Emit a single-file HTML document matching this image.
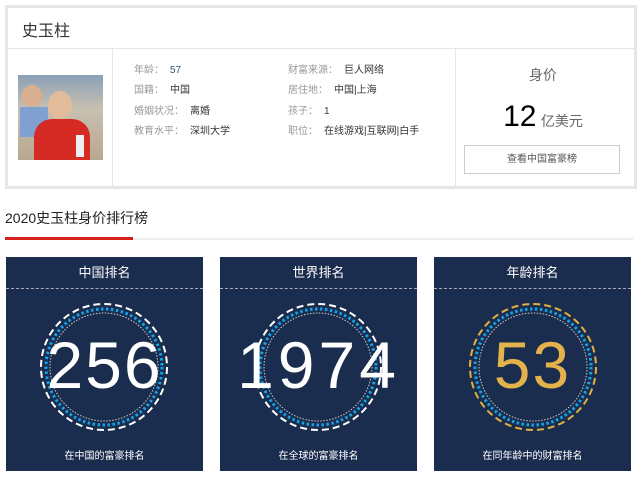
<!DOCTYPE html>
<html><head><meta charset="utf-8"><style>
body{margin:0;width:640px;height:481px;background:#fff;font-family:"Liberation Sans","Noto Sans CJK SC",sans-serif;position:relative;overflow:hidden}
.a{position:absolute}
.card{left:5px;top:5px;width:626px;height:178px;border:3px solid #e6e6e6;background:#fff}
.lab{color:#999;font-size:10px;line-height:14px}
.val{color:#333;font-size:10px;line-height:14px}
.panel{top:257px;width:197px;height:214px;background:#1b2d4e}
.ph{top:0;left:0;width:100%;height:31px;border-bottom:1px dashed #aab;color:#fff;font-size:13px;text-align:center;line-height:31px}
.num{top:70px;left:-20px;width:237px;text-align:center;color:#fff;font-size:66px;letter-spacing:2px;line-height:76px}
.cap{top:190px;left:0;width:100%;text-align:center;color:#fff;font-size:10px}
</style></head><body>
<div class="a card">
 <div class="a" style="left:0;top:0;width:626px;height:40px;border-bottom:1px solid #e6e6e6"></div>
 <div class="a" style="left:14px;top:9px;font-size:16px;color:#333">史玉柱</div>
 <div class="a" style="left:104px;top:41px;width:1px;height:137px;background:#e6e6e6"></div>
 <div class="a" style="left:447px;top:41px;width:1px;height:137px;background:#e6e6e6"></div>
 <div class="a" style="left:10px;top:67px;width:85px;height:85px;background:linear-gradient(#8aa0b8,#c8c0b0 40%,#b8a890);overflow:hidden">
  <div class="a" style="left:4px;top:10px;width:20px;height:22px;border-radius:50%;background:#d8b090"></div>
  <div class="a" style="left:2px;top:32px;width:28px;height:30px;background:#7fa0d0"></div>
  <div class="a" style="left:30px;top:16px;width:24px;height:28px;border-radius:50%;background:#e2bc9a"></div>
  <div class="a" style="left:16px;top:44px;width:56px;height:45px;border-radius:18px 18px 0 0;background:#d62a25"></div>
  <div class="a" style="left:58px;top:60px;width:8px;height:22px;background:#eee"></div>
 </div>
 <div class="a lab" style="left:126px;top:56px">年龄：</div><div class="a val" style="left:162px;top:56px;color:#357">57</div>
 <div class="a lab" style="left:126px;top:76px">国籍：</div><div class="a val" style="left:162px;top:76px">中国</div>
 <div class="a lab" style="left:126px;top:97px">婚姻状况：</div><div class="a val" style="left:182px;top:97px">离婚</div>
 <div class="a lab" style="left:126px;top:117px">教育水平：</div><div class="a val" style="left:182px;top:117px">深圳大学</div>
 <div class="a lab" style="left:280px;top:56px">财富来源：</div><div class="a val" style="left:336px;top:56px">巨人网络</div>
 <div class="a lab" style="left:280px;top:76px">居住地：</div><div class="a val" style="left:326px;top:76px">中国|上海</div>
 <div class="a lab" style="left:280px;top:97px">孩子：</div><div class="a val" style="left:316px;top:97px">1</div>
 <div class="a lab" style="left:280px;top:117px">职位：</div><div class="a val" style="left:316px;top:117px">在线游戏|互联网|白手</div>
 <div class="a" style="left:448px;top:57px;width:174px;text-align:center;font-size:14px;color:#666">身价</div>
 <div class="a" style="left:448px;top:92px;width:174px;text-align:center;color:#000"><span style="font-size:30px">12</span> <span style="font-size:14px;color:#666">亿美元</span></div>
 <div class="a" style="left:456px;top:137px;width:154px;height:27px;border:1px solid #ccc;text-align:center;line-height:27px;font-size:10px;color:#555">查看中国富豪榜</div>
</div>
<div class="a" style="left:5px;top:208px;font-size:14px;color:#222">2020史玉柱身价排行榜</div>
<div class="a" style="left:5px;top:238px;width:628px;height:2px;background:#eee"></div>
<div class="a" style="left:5px;top:237px;width:128px;height:3px;background:#d7201b"></div>

<div class="a panel" style="left:6px">
 <div class="a ph">中国排名</div>
 <svg class="a" style="left:0;top:0" width="197" height="214"><circle cx="98" cy="110" r="63" fill="none" stroke="#fff" stroke-width="2" stroke-dasharray="7 4"/><circle cx="98" cy="110" r="58" fill="none" stroke="#12a4e8" stroke-width="3" stroke-dasharray="2.5 2.5"/><circle cx="98" cy="110" r="54" fill="none" stroke="#ccc" stroke-width="1" stroke-dasharray="1.5 1.5"/></svg>
 <div class="a num">256</div>
 <div class="a cap">在中国的富豪排名</div>
</div>
<div class="a panel" style="left:220px">
 <div class="a ph">世界排名</div>
 <svg class="a" style="left:0;top:0" width="197" height="214"><circle cx="98" cy="110" r="63" fill="none" stroke="#fff" stroke-width="2" stroke-dasharray="7 4"/><circle cx="98" cy="110" r="58" fill="none" stroke="#12a4e8" stroke-width="3" stroke-dasharray="2.5 2.5"/><circle cx="98" cy="110" r="54" fill="none" stroke="#ccc" stroke-width="1" stroke-dasharray="1.5 1.5"/></svg>
 <div class="a num" style="letter-spacing:4px">1974</div>
 <div class="a cap">在全球的富豪排名</div>
</div>
<div class="a panel" style="left:434px">
 <div class="a ph">年龄排名</div>
 <svg class="a" style="left:0;top:0" width="197" height="214"><circle cx="99" cy="110" r="63" fill="none" stroke="#e0b040" stroke-width="2" stroke-dasharray="7 4"/><circle cx="99" cy="110" r="58" fill="none" stroke="#12a4e8" stroke-width="3" stroke-dasharray="2.5 2.5"/><circle cx="99" cy="110" r="54" fill="none" stroke="#ccc" stroke-width="1" stroke-dasharray="1.5 1.5"/></svg>
 <div class="a num" style="color:#e3b24a">53</div>
 <div class="a cap">在同年龄中的财富排名</div>
</div>
</body></html>
